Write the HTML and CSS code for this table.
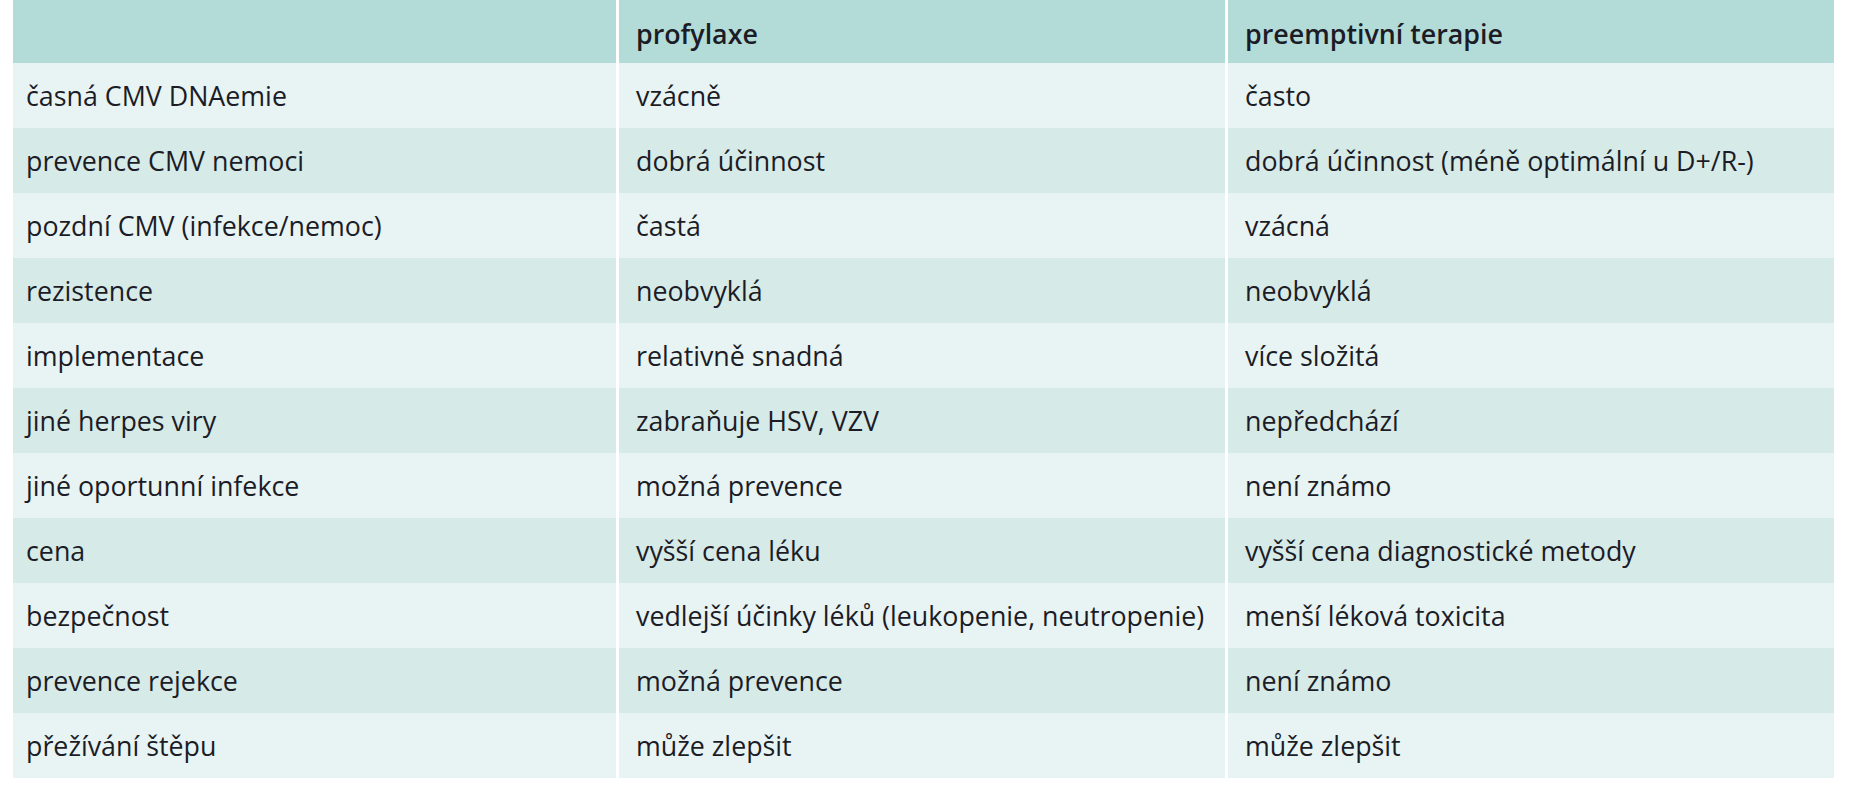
FILE: index.html
```html
<!DOCTYPE html>
<html lang="cs">
<head>
<meta charset="utf-8">
<title>Profylaxe vs. preemptivní terapie</title>
<link rel="stylesheet" href="styles.css">
</head>
<body>
<table class="cmp">
  <thead>
    <tr class="head">
      <th class="c1"></th>
      <th class="c2">profylaxe</th>
      <th class="c3">preemptivní terapie</th>
    </tr>
  </thead>
  <tbody>
    <tr><td class="c1">časná CMV DNAemie</td><td>vzácně</td><td>často</td></tr>
    <tr><td class="c1">prevence CMV nemoci</td><td>dobrá účinnost</td><td>dobrá účinnost (méně optimální u D+/R-)</td></tr>
    <tr><td class="c1">pozdní CMV (infekce/nemoc)</td><td>častá</td><td>vzácná</td></tr>
    <tr><td class="c1">rezistence</td><td>neobvyklá</td><td>neobvyklá</td></tr>
    <tr><td class="c1">implementace</td><td>relativně snadná</td><td>více složitá</td></tr>
    <tr><td class="c1">jiné herpes viry</td><td>zabraňuje HSV, VZV</td><td>nepředchází</td></tr>
    <tr><td class="c1">jiné oportunní infekce</td><td>možná prevence</td><td>není známo</td></tr>
    <tr><td class="c1">cena</td><td>vyšší cena léku</td><td>vyšší cena diagnostické metody</td></tr>
    <tr><td class="c1">bezpečnost</td><td>vedlejší účinky léků (leukopenie, neutropenie)</td><td>menší léková toxicita</td></tr>
    <tr><td class="c1">prevence rejekce</td><td>možná prevence</td><td>není známo</td></tr>
    <tr><td class="c1">přežívání štěpu</td><td>může zlepšit</td><td>může zlepšit</td></tr>
  </tbody>
</table>
</body>
</html>
```
FILE: styles.css
```css
html, body {
  margin: 0;
  padding: 0;
  background: #ffffff;
}

body {
  font-family: "Open Sans", "Noto Sans", "Liberation Sans", sans-serif;
  color: #1c1c26;
}

.cmp {
  margin-left: 13px;
  width: 1821px;
  border-collapse: separate;
  border-spacing: 0;
  table-layout: fixed;
}

.cmp th,
.cmp td {
  box-sizing: border-box;
  text-align: left;
  vertical-align: middle;
  padding: 0 17px;
  font-size: 26.8px;
  line-height: 30px;
  white-space: nowrap;
  border-left: 3px solid #ffffff;
}

.cmp .c1 {
  border-left: 0;
  padding-left: 13px;
  width: 603px;
}

.cmp .c2,
.cmp .c3 {
  width: 609px;
}

.cmp th {
  font-weight: 600;
  padding-top: 5px;
}

.head {
  height: 63px;
  background: #b3dbd8;
}

.cmp tbody tr {
  height: 65px;
}

.cmp tbody tr:nth-child(odd) {
  background: #e8f4f3;
}

.cmp tbody tr:nth-child(even) {
  background: #d6eae8;
}
```
